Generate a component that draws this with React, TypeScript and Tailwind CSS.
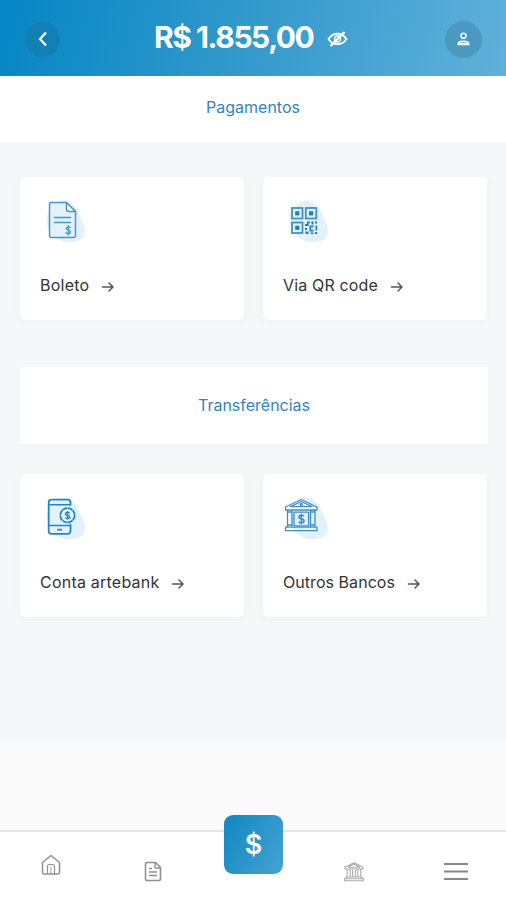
import React from 'react';

type IconProps = { className?: string };

function Blob() {
  return (
    <path
      d="M17 4C24 2 31 8 35 17C38 23 43 32 40 39C37 45 28 46 21 45C12 43 4 35 3 25C2 15 8 6 17 4Z"
      fill="#e3f1fb"
    />
  );
}

function BoletoIcon() {
  return (
    <svg width="44" height="46" viewBox="0 0 44 46" fill="none" stroke="#4a97ca" strokeWidth="1.5" strokeLinejoin="round" strokeLinecap="round">
      <g stroke="none"><Blob /></g>
      <path d="M7 5.500H22L31.500 14.500V38.500Q31.500 40.500 29.500 40.500H7.500Q5.500 40.500 5.500 38.500V7Q5.500 5.500 7 5.500Z" fill="#e3f1fb" />
      <path d="M22.500 5.500V12Q22.500 14.500 25 14.500H31.500Z" fill="#fff" />
      <path d="M10.500 20.500H26.500M10.500 25.500H26.500" />
      <path d="M26.300 30.600Q25.500 29.900 24.300 29.900Q22.300 29.900 22.300 31.500Q22.300 32.800 24.300 33.200Q26.500 33.600 26.500 35.100Q26.500 36.700 24.300 36.700Q22.800 36.700 22 35.800M24.300 28.600V38" strokeWidth="1.300" />
    </svg>
  );
}

function QrIcon() {
  return (
    <svg width="44" height="46" viewBox="0 0 44 46" fill="none" stroke="#3d92c8" strokeWidth="1.800">
      <g stroke="none"><Blob /></g>
      <rect x="5" y="11" width="10.500" height="10.500" />
      <rect x="18.800" y="11" width="10.500" height="10.500" />
      <rect x="5" y="25.500" width="10.500" height="10.500" />
      <g fill="#1c7fbf" stroke="none">
        <rect x="8.200" y="14.200" width="4.200" height="4.200" />
        <rect x="22" y="14.200" width="4.200" height="4.200" />
        <rect x="8.200" y="28.700" width="4.200" height="4.200" />
        <path d="M18 27h2v-2.500h3v1.500h-1.300v3H18zM24.500 24.500h2v3h-2zM28 24.500h2.200v2H28zM22.500 28.500h4v1.700h-2.300v2.500h2.300v1.700h-4zM18 31h2v2h-2zM28.500 28.500h1.700v5h-1.700zM18.500 34.500h3v2.400h-3zM23.500 35.500h3v1.400h-3zM28 35h2.200v1.900H28z" />
      </g>
    </svg>
  );
}

function PhoneIcon() {
  return (
    <svg width="44" height="46" viewBox="0 0 44 46" fill="none" stroke="#2387c5" strokeWidth="1.800" strokeLinejoin="round">
      <g stroke="none"><Blob /></g>
      <path d="M26.500 11.500V8.500Q26.500 5.700 23.700 5.700H7.500Q4.700 5.700 4.700 8.500V37Q4.700 39.800 7.500 39.800H23.700Q26.500 39.800 26.500 37V30" />
      <path d="M5 10.800H26.500M5 31.500H26.500" strokeWidth="1.400" />
      <path d="M13.300 35.700H18" strokeWidth="1.800" />
      <circle cx="23.500" cy="21.300" r="7.200" fill="#e3f1fb" strokeDasharray="5.200 0.454" />
      <path d="M25.800 19.200Q25 18.400 23.500 18.400Q21.400 18.400 21.400 19.900Q21.400 21.100 23.500 21.400Q25.800 21.800 25.800 23.100Q25.800 24.500 23.500 24.500Q21.900 24.500 21.100 23.600M23.500 17V25.800" strokeWidth="1.300" />
    </svg>
  );
}

function BanksIcon() {
  return (
    <svg className="overflow-visible" width="44" height="46" viewBox="0 0 44 46" fill="none" stroke="#3e8fc8" strokeWidth="1.300" strokeLinejoin="round">
      <g stroke="none"><Blob /></g>
      <path d="M-1.500 13L14.200 5.500L30 13V16H-1.500Z" fill="#fff" />
      <path d="M3.500 12.700H25.200L14.200 7.500Z" />
      <circle cx="14.200" cy="10.500" r="1.100" />
      <path d="M0.500 16V33M5 16V33M23.500 16V33M28 16V33" />
      <rect x="7" y="18.200" width="14.600" height="13.600" />
      <path d="M-1.500 33.200H30V36.700H-1.500ZM0.500 18H5M23.500 18H28M0.500 31H5M23.500 31H28" />
      <path d="M16.800 22.300Q16 21.200 14.300 21.200Q12 21.200 12 23Q12 24.500 14.300 24.900Q17 25.400 17 27Q17 28.900 14.300 28.900Q12.600 28.900 11.700 27.700M14.300 19.800V30.300" strokeWidth="1.600" />
    </svg>
  );
}

function ArrowIcon({ className }: IconProps) {
  return (
    <svg className={className} width="13" height="12" viewBox="0 0 13 12" fill="none" stroke="#555" strokeWidth="1.500" strokeLinecap="round" strokeLinejoin="round">
      <path d="M1.500 6H12M8 2L12 6L8 10" />
    </svg>
  );
}

interface ActionCardProps {
  label: string;
  icon: React.ReactNode;
  textClass: string;
}

function ActionCard({ label, icon, textClass }: ActionCardProps) {
  return (
    <button className="h-[143px] rounded-[5px] bg-white pl-5 pt-5 flex flex-col items-start shadow-[0_2px_8px_rgba(50,70,90,0.035)]">
      <span className="h-[76px] pl-1">
        {icon}
      </span>
      <span className="flex items-center gap-3 h-6 whitespace-nowrap text-[#343434]">
        <span className={textClass}>{label}</span>
        <ArrowIcon className="mt-1" />
      </span>
    </button>
  );
}

function Header() {
  return (
    <header className="h-[76px] flex items-center bg-[linear-gradient(105deg,#0586c5_0%,#3299cb_48%,#60b1da_100%)] text-white">
      <button className="ml-[25px] mt-0.5 w-[35px] h-[35px] rounded-full bg-[#147db0]/80 flex items-center justify-center">
        <svg width="10" height="16" viewBox="0 0 10 16" fill="none" stroke="currentColor" strokeWidth="2.2">
          <path d="M8 1.500L2 8L8 14.500" />
        </svg>
      </button>
      <h1 className="ml-[94px] w-[160px] -mt-0.5 text-[30px] leading-9 font-bold tracking-[-1.45px] whitespace-nowrap">R$ 1.855,00</h1>
      <svg className="ml-[13px] mt-0.5" width="21" height="18" viewBox="0 0 21 18" fill="none" stroke="currentColor" strokeWidth="1.900">
        <path d="M1.500 9Q5 3.700 10.500 3.700Q16 3.700 19.500 9Q16 14.300 10.500 14.300Q5 14.300 1.500 9Z" />
        <circle cx="10.500" cy="9" r="3" strokeWidth="1.400" />
        <path d="M3.500 16L17.500 2" strokeWidth="2.4" />
      </svg>
      <button className="ml-[97px] mt-0.5 w-[37px] h-[37px] rounded-full bg-[#4b99c1] flex items-center justify-center">
        <svg width="13" height="14" viewBox="0 0 13 14" fill="none" stroke="currentColor" strokeWidth="1.500">
          <circle cx="6.500" cy="3.800" r="2.500" />
          <path d="M1.200 12.500V11.700Q1.200 9.300 6.500 9.300Q11.800 9.300 11.800 11.700V12.500Z" />
          <path d="M2 11.500H11" />
        </svg>
      </button>
    </header>
  );
}

function BottomNav() {
  return (
    <nav className="relative h-[70px] bg-white border-t-2 border-[#e5e5e7] text-[#919191]">
      <div className="h-full grid grid-cols-5 items-center justify-items-center">
        <svg className="-mt-0.5" width="20" height="22" viewBox="0 0 20 22" fill="none" stroke="currentColor" strokeWidth="1.500" strokeLinejoin="round">
          <path d="M1.500 8.500L10 1.500L18.500 8.500V18.500Q18.500 20 17 20H3Q1.500 20 1.500 18.500Z" />
          <path d="M6.500 20V12.500Q6.500 10.500 8.500 10.500H11.500Q13.500 10.500 13.500 12.500V20" strokeWidth="1.200" />
          <path d="M10 12.500V20" strokeWidth="0.800" />
        </svg>
        <svg className="mt-2.5 ml-0.5" width="18" height="21" viewBox="0 0 18 21" fill="none" stroke="currentColor" strokeWidth="1.600" strokeLinejoin="round">
          <path d="M3 1.500H11.500L16.500 6.500V18Q16.500 19.500 15 19.500H3Q1.500 19.500 1.500 18V3Q1.500 1.500 3 1.500Z" />
          <path d="M11 1.500V7H16.500M5 7.500H8M5 11H13M5 14.500H13" strokeWidth="1.300" />
        </svg>
        <span />
        <svg className="mt-2.5 text-[#aaa]" width="20" height="21" viewBox="0 0 20 21" fill="none" stroke="currentColor" strokeWidth="1.100">
          <path d="M1 8V6.300L10 1.500L19 6.300V8ZM4 6.300H16L10 3ZM3.200 8V16M6.200 8V16M8.600 9V16M11.400 9V16M13.800 8V16M16.800 8V16M2 16H18V17.700H2ZM0.500 17.700H19.500V19.700H0.500Z" />
        </svg>
        <svg className="mt-2.5 ml-0.5" width="24" height="19" viewBox="0 0 24 19" stroke="#888" strokeWidth="1.900">
          <path d="M0 2H24M0 9.500H24M0 17H24" />
        </svg>
      </div>
      <button className="absolute left-[224px] -top-[17px] w-[59px] h-[59px] rounded-[9px] bg-[linear-gradient(120deg,#1187c1,#45a3d4)] text-white flex items-center justify-center">
        <span className="text-[27px] leading-none font-semibold">$</span>
      </button>
    </nav>
  );
}

export default function App() {
  return (
    <div className="w-[506px] h-[900px] overflow-hidden flex flex-col bg-[#fafafa] font-['Inter','Liberation_Sans',sans-serif]">
      <Header />
      <div className="h-[66px] pb-1 bg-white flex items-center justify-center">
        <h2 className="text-base text-[#3583ba]">Pagamentos</h2>
      </div>
      <main className="h-[600px] bg-[#f5f7f9] pt-[35px] pl-5 pr-[19px]">
        <section className="grid grid-cols-2 gap-[19px]">
          <ActionCard label="Boleto" icon={<BoletoIcon />} textClass="text-base tracking-[0.25px]" />
          <ActionCard label="Via QR code" icon={<QrIcon />} textClass="text-base tracking-[0.15px]" />
        </section>
        <div className="mt-[47px] -mr-px h-[77px] pb-0.5 bg-white flex items-center justify-center">
          <h2 className="text-base text-[#3583ba]">Transferências</h2>
        </div>
        <section className="mt-[30px] grid grid-cols-2 gap-[19px]">
          <ActionCard label="Conta artebank" icon={<PhoneIcon />} textClass="text-base tracking-[0.22px]" />
          <ActionCard label="Outros Bancos" icon={<BanksIcon />} textClass="text-base tracking-[0.05px]" />
        </section>
      </main>
      <div className="flex-1" />
      <BottomNav />
    </div>
  );
}
